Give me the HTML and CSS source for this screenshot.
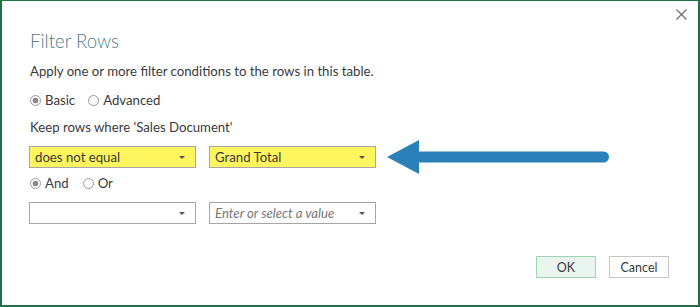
FILE: index.html
```html
<!DOCTYPE html>
<html lang="en">

<head>
    <meta charset="UTF-8">
    <title>Filter Rows</title>
    <link rel="stylesheet" href="styles.css">
</head>

<body>
    <div class="dialog">
        <button class="close" aria-label="Close">
            <svg width="11" height="11" viewBox="0 0 11 11">
                <path d="M0.5 0.5 L10.5 10.5 M10.5 0.5 L0.5 10.5" stroke="#6f6f6f" stroke-width="1.3" fill="none" />
            </svg>
        </button>

        <h1 class="title">Filter Rows</h1>
        <p class="intro">Apply one or more filter conditions to the rows in this table.</p>

        <div class="radios">
            <label class="radio checked"><span class="dot"></span>Basic</label>
            <label class="radio"><span class="dot"></span>Advanced</label>
        </div>

        <p class="keep">Keep rows where 'Sales Document'</p>

        <div class="row">
            <div class="select hl">does not equal<span class="caret"></span></div>
            <div class="select hl">Grand Total<span class="caret"></span></div>
            <!-- arrow pointing at the value box -->
            <svg class="arrow" width="224" height="34" viewBox="0 0 224 34">
                <polygon points="0,17 32,0 32,34" fill="#2a81ba" />
                <line x1="30" y1="17" x2="216.5" y2="17" stroke="#2a81ba" stroke-width="11" stroke-linecap="round" />
            </svg>
        </div>

        <div class="radios and-or">
            <label class="radio checked"><span class="dot"></span>And</label>
            <label class="radio"><span class="dot"></span>Or</label>
        </div>

        <div class="row">
            <div class="select"><span class="caret"></span></div>
            <div class="select placeholder">Enter or select a value<span class="caret"></span></div>
        </div>

        <div class="buttons">
            <button class="btn ok">OK</button>
            <button class="btn">Cancel</button>
        </div>
    </div>
</body>

</html>
```

FILE: styles.css
```css
* {
    box-sizing: border-box;
}

body {
    margin: 0;
    background: #fff;
}

.dialog {
    position: relative;
    width: 700px;
    height: 307px;
    border: 2px solid #1f7145;
    border-top-width: 1px;
    padding: 0 29px 0 28px;
    font-family: Lato, "Open Sans", sans-serif;
    font-size: 13.2px;
    color: #3a3a3a;
}

.close {
    position: absolute;
    top: 8px;
    right: 11px;
    padding: 0;
    border: none;
    background: none;
}

.close svg {
    display: block;
}

.title {
    margin: 26px 0 0;
    font-size: 18.6px;
    line-height: 28px;
    font-weight: 300;
    color: #4d7b8a;
}

.intro {
    margin: 6px 0 0;
    line-height: 20px;
}

.radios {
    display: flex;
    margin-top: 9px;
    line-height: 20px;
}

.radio {
    display: flex;
    align-items: center;
    margin-right: 13px;
}

.radio .dot {
    width: 11px;
    height: 11px;
    margin-right: 4px;
    border: 1px solid #9a9a9a;
    border-radius: 50%;
    background: #fff;
}

.radio.checked .dot {
    background: radial-gradient(circle, #8a8a8a 0 2.6px, #fff 3.2px);
}

.keep {
    margin: 7px 0 0;
    line-height: 20px;
}

.row {
    display: flex;
    align-items: center;
    gap: 13px;
    margin: 9px 0 0 -1px;
}

.select {
    position: relative;
    width: 167px;
    height: 22px;
    padding: 0 0 0 5px;
    border: 1px solid #a6a6a6;
    line-height: 20px;
    background: #fff;
}

.select.hl {
    background: #fff55e;
}

.select.placeholder {
    color: #777;
    font-style: italic;
}

.caret {
    position: absolute;
    right: 10px;
    top: 9px;
    border-left: 3px solid transparent;
    border-right: 3px solid transparent;
    border-top: 3px solid #555;
}

/* 箭頭比列高，用負邊距不撐高 */
.arrow {
    display: block;
    margin: -6px 0 -6px -2px;
}

.and-or {
    margin-top: 5px;
}

.and-or .radio {
    margin-right: 14px;
}

.buttons {
    display: flex;
    justify-content: flex-end;
    gap: 13px;
    margin-top: 32px;
}

.btn {
    width: 60px;
    height: 22px;
    padding: 0;
    border: 1px solid #c6c6c6;
    background: #fff;
    font-family: inherit;
    font-size: 12.5px;
    color: #3a3a3a;
}

.btn.ok {
    border-color: #9dd6b5;
    background: #e9f4ee;
}
```
